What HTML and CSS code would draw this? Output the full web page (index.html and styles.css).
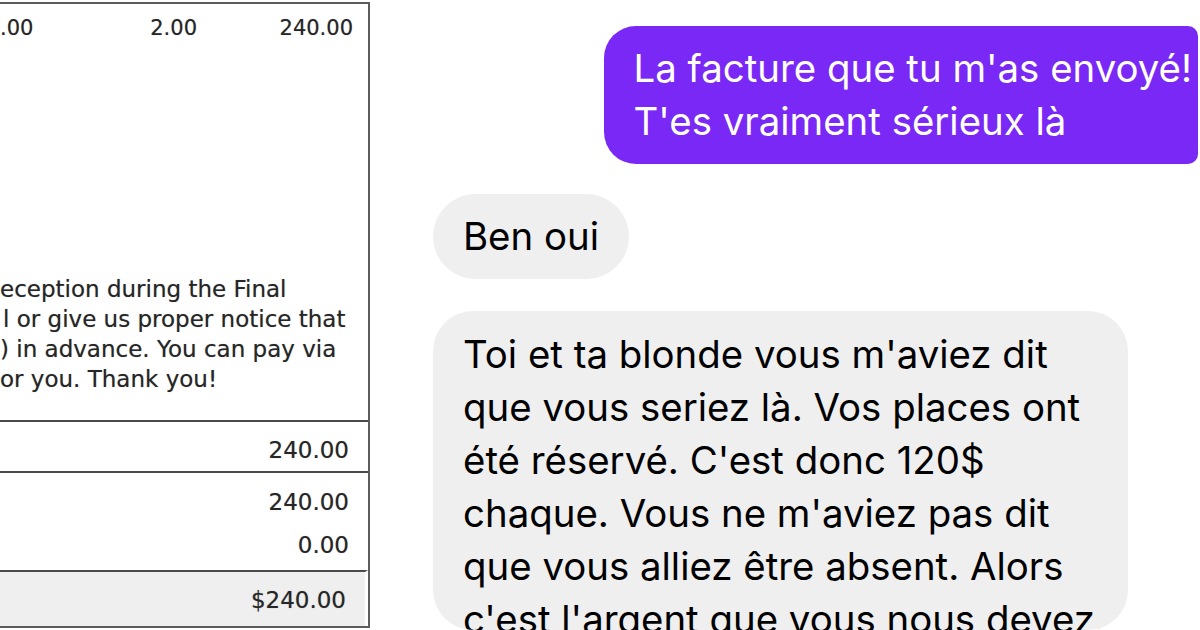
FILE: index.html
```html
<!DOCTYPE html>
<html>
  <head>
    <title>La facture</title>
    <link rel="stylesheet" href="styles.css">
  </head>

  <body>
    <div class="page">
      <div class="facture">
        <div class="ligne-haut">
          <span>.00</span>
          <span>2.00</span>
          <span>240.00</span>
        </div>

        <div class="note">
          <div>eception during the Final</div>
          <div class="decale">l or give us proper notice that</div>
          <div>) in advance. You can pay via</div>
          <div>or you. Thank you!</div>
        </div>

        <div class="somme">240.00</div>
        <div class="somme double">
          <div>240.00</div>
          <div>0.00</div>
        </div>
        <div class="somme total">$240.00</div>
      </div>

      <div class="chat">
        <div class="bulle envoye">La facture que tu m'as envoyé!<br>T'es vraiment sérieux là</div>
        <div class="bulle recu court">Ben oui</div>
        <div class="bulle recu long">Toi et ta blonde vous m'aviez dit<br>que vous seriez là. Vos places ont<br>été réservé. C'est donc 120$<br>chaque. Vous ne m'aviez pas dit<br>que vous alliez être absent. Alors<br>c'est l'argent que vous nous devez.</div>
      </div>
    </div>
  </body>
</html>
```

FILE: styles.css
```css
body {
  margin: 0;
  background: #fff;
}
.page {
  display: flex;
  width: 1200px;
  height: 630px;
  overflow: hidden;
}

/* facture scannee a gauche */
.facture {
  flex: none;
  width: 368px;
  height: 622px;
  margin-top: 2px;
  display: flex;
  flex-direction: column;
  border-top: 2px solid #5c5c5c;
  border-right: 2px solid #5c5c5c;
  border-bottom: 2px solid #5c5c5c;
  font-family: "DejaVu Sans", Verdana, sans-serif;
  color: #262626;
  text-shadow: 0 0 1px rgba(0, 0, 0, 0.35);
}
.ligne-haut {
  display: grid;
  grid-template-columns: 33px 164px 156px;
  padding-top: 11px;
  font-size: 21px;
  line-height: 26px;
  text-align: right;
}
.note {
  flex: 1;
  padding-top: 233px;
  font-size: 23px;
  line-height: 30px;
  white-space: nowrap;
  overflow: hidden;
}
.decale {
  padding-left: 3px;
}
.somme {
  border-top: 2px solid #4a4a4a;
  padding: 15px 19px 0 0;
  height: 34px;
  font-size: 23px;
  line-height: 26px;
  text-align: right;
}
.somme.double {
  height: 81px;
  padding-top: 16px;
  display: flex;
  flex-direction: column;
  gap: 17px;
}
.somme.total {
  height: 39px;
  background: #efefef;
  border-right: 3px solid #fff;
}

/* conversation */
.chat {
  flex: 1;
  display: flex;
  flex-direction: column;
  align-items: flex-start;
  padding-left: 63px;
  font-family: Inter, "Liberation Sans", sans-serif;
  font-size: 38.4px;
  line-height: 53px;
  white-space: nowrap;
}
.bulle {
  padding: 16px 30px;
  border-radius: 40px;
}
.envoye {
  align-self: flex-end;
  margin-top: 26px;
  margin-right: 2px;
  padding-right: 6px;
  background: #7a28f5;
  color: #fff;
  border-radius: 32px 10px 10px 32px;
}
.recu {
  background: #efefef;
  color: #000;
}
.court {
  margin-top: 30px;
  padding-top: 16px;
  padding-bottom: 16px;
  border-radius: 43px;
}
.long {
  margin-top: 32px;
  width: 635px;
  padding-top: 17px;
  overflow: hidden;
}
```
